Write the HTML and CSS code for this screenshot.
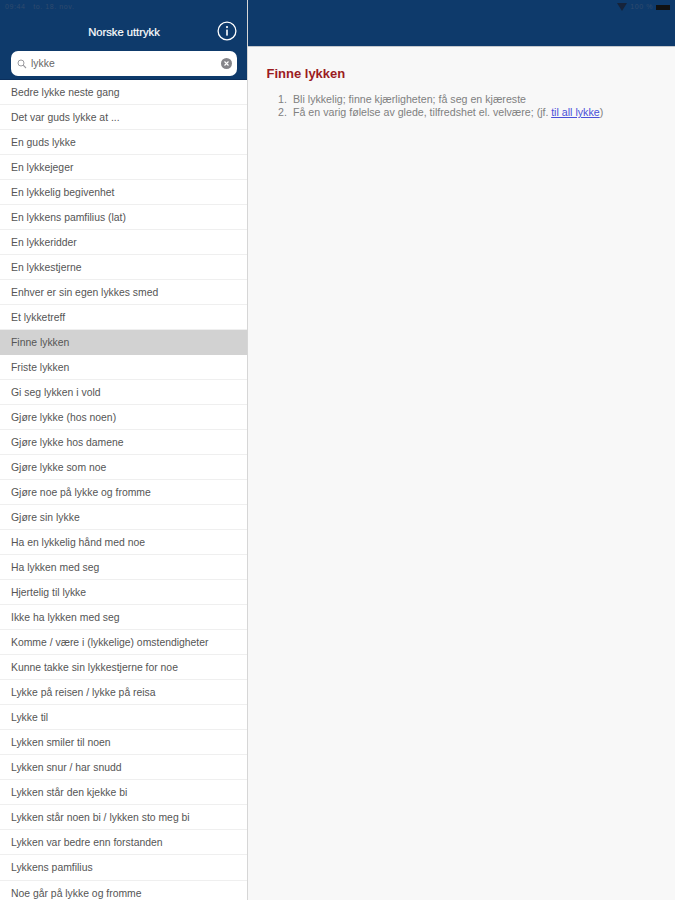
FILE: index.html
```html
<!DOCTYPE html>
<html lang="en">
<head>
    <meta charset="UTF-8">
    <meta name="viewport" content="width=device-width, initial-scale=1.0">
    <title>Norske uttrykk</title>
    <link rel="stylesheet" href="styles.css">
</head>
<body>
    <div class="app">
        <aside class="sidebar">
            <header class="side-head">
                <div class="status-left">09:44 &nbsp; to. 18. nov.</div>
                <div class="title-row">
                    <h1>Norske uttrykk</h1>
                    <svg class="info" width="20" height="20" viewBox="0 0 20 20">
                        <circle cx="10" cy="10" r="8.9" fill="none" stroke="#fff" stroke-width="1.3"/>
                        <rect x="9.2" y="8.6" width="1.6" height="6" fill="#fff"/>
                        <circle cx="10" cy="6.1" r="1.1" fill="#fff"/>
                    </svg>
                </div>
                <div class="search">
                    <svg width="10" height="10" viewBox="0 0 10 10">
                        <circle cx="4" cy="4" r="3" fill="none" stroke="#9a9a9f" stroke-width="1"/>
                        <path d="M6.2 6.2 L9 9" stroke="#9a9a9f" stroke-width="1.1"/>
                    </svg>
                    <span class="query">lykke</span>
                    <svg class="clear" width="11" height="11" viewBox="0 0 11 11">
                        <circle cx="5.5" cy="5.5" r="5.5" fill="#85858a"/>
                        <path d="M3.5 3.5 L7.5 7.5 M7.5 3.5 L3.5 7.5" stroke="#fff" stroke-width="1.1"/>
                    </svg>
                </div>
            </header>
            <ul class="list">
                <li>Bedre lykke neste gang</li>
                <li>Det var guds lykke at ...</li>
                <li>En guds lykke</li>
                <li>En lykkejeger</li>
                <li>En lykkelig begivenhet</li>
                <li>En lykkens pamfilius (lat)</li>
                <li>En lykkeridder</li>
                <li>En lykkestjerne</li>
                <li>Enhver er sin egen lykkes smed</li>
                <li>Et lykketreff</li>
                <li class="selected">Finne lykken</li>
                <li>Friste lykken</li>
                <li>Gi seg lykken i vold</li>
                <li>Gjøre lykke (hos noen)</li>
                <li>Gjøre lykke hos damene</li>
                <li>Gjøre lykke som noe</li>
                <li>Gjøre noe på lykke og fromme</li>
                <li>Gjøre sin lykke</li>
                <li>Ha en lykkelig hånd med noe</li>
                <li>Ha lykken med seg</li>
                <li>Hjertelig til lykke</li>
                <li>Ikke ha lykken med seg</li>
                <li>Komme / være i (lykkelige) omstendigheter</li>
                <li>Kunne takke sin lykkestjerne for noe</li>
                <li>Lykke på reisen / lykke på reisa</li>
                <li>Lykke til</li>
                <li>Lykken smiler til noen</li>
                <li>Lykken snur / har snudd</li>
                <li>Lykken står den kjekke bi</li>
                <li>Lykken står noen bi / lykken sto meg bi</li>
                <li>Lykken var bedre enn forstanden</li>
                <li>Lykkens pamfilius</li>
                <li>Noe går på lykke og fromme</li>
            </ul>
        </aside>
        <main class="detail">
            <header class="detail-head">
                <div class="status-right">
                    <svg width="10" height="8" viewBox="0 0 10 8"><path d="M0 0 H10 L5 8 Z" fill="#16233a"/></svg>
                    <span class="percent">100 %</span>
                    <span class="battery"></span>
                </div>
            </header>
            <article class="entry">
                <h2>Finne lykken</h2>
                <ol>
                    <li>Bli lykkelig; finne kjærligheten; få seg en kjæreste</li>
                    <li>Få en varig følelse av glede, tilfredshet el. velvære; (jf. <a href="#">til all lykke</a>)</li>
                </ol>
            </article>
        </main>
    </div>
</body>
</html>
```

FILE: styles.css
```css
html, body {
    margin: 0;
    height: 100%;
    overflow: hidden;
}
body {
    font-family: "Liberation Sans", Arial, sans-serif;
    background-color: #f8f8f8;
}
.app {
    display: flex;
    height: 900px;
}

/* left column */
.sidebar {
    width: 248px;
    flex: none;
    overflow: hidden;
    background: #fff;
    border-right: 1px solid #d6d6d6;
    box-sizing: border-box;
}
.side-head {
    height: 80px;
    box-sizing: border-box;
    background-color: #0e3a6b;
    border-bottom: 1px solid #0b2f5c;
    padding: 3px 10px 0 11px;
}
.status-left {
    font-size: 7px;
    line-height: 8px;
    letter-spacing: 0.6px;
    color: #2f4a6e;
    margin-left: -6px;
}
.title-row {
    display: flex;
    align-items: center;
    justify-content: center;
    position: relative;
    height: 20px;
    margin-top: 10px;
}
.title-row h1 {
    margin: 2px 0 0;
    font-size: 11.2px;
    font-weight: normal;
    color: #fff;
    -webkit-text-stroke: 0.2px #fff;
}
.info {
    position: absolute;
    right: 0;
    top: 0;
}
.search {
    display: flex;
    align-items: center;
    gap: 4px;
    height: 25px;
    box-sizing: border-box;
    margin-top: 10px;
    padding: 0 5px 0 6px;
    background: #fff;
    border-radius: 7px;
}
.query {
    flex: 1;
    font-size: 10.4px;
    color: #666;
}
.list {
    list-style: none;
    margin: 0;
    padding: 0;
}
.list li {
    height: 25.03px;
    line-height: 25px;
    box-sizing: border-box;
    padding-left: 11px;
    font-size: 10.4px;
    color: #555;
    white-space: nowrap;
    border-bottom: 1px solid #efefef;
}
.list li.selected {
    background-color: #d2d2d2;
    border-bottom-color: #d2d2d2;
}

/* right column */
.detail {
    flex: 1;
}
.detail-head {
    height: 47px;
    box-sizing: border-box;
    background-color: #0e3a6b;
    border-bottom: 1px solid #c4c8cd;
    padding: 3px 5px 0;
}
.status-right {
    display: flex;
    justify-content: flex-end;
    align-items: center;
    gap: 3px;
    font-size: 7px;
    line-height: 8px;
    letter-spacing: 0.6px;
    color: #2f4a6e;
}
.battery {
    width: 14px;
    height: 5px;
    background: #111;
}
.entry {
    padding: 20px 18.5px;
}
.entry h2 {
    margin: 0 0 12px;
    font-size: 13px;
    line-height: 14px;
    color: #9b1c22;
}
.entry ol {
    margin: 0;
    padding: 0 0 0 11.5px;
    list-style: none;
    counter-reset: item;
    font-size: 10.65px;
    line-height: 13px;
    color: #808080;
}
.entry ol li {
    display: flex;
    counter-increment: item;
}
.entry ol li::before {
    content: counter(item) ".";
    width: 15px;
    flex: none;
}
.entry a {
    color: #4a50d8;
    margin-left: 0.25em;
}
```
